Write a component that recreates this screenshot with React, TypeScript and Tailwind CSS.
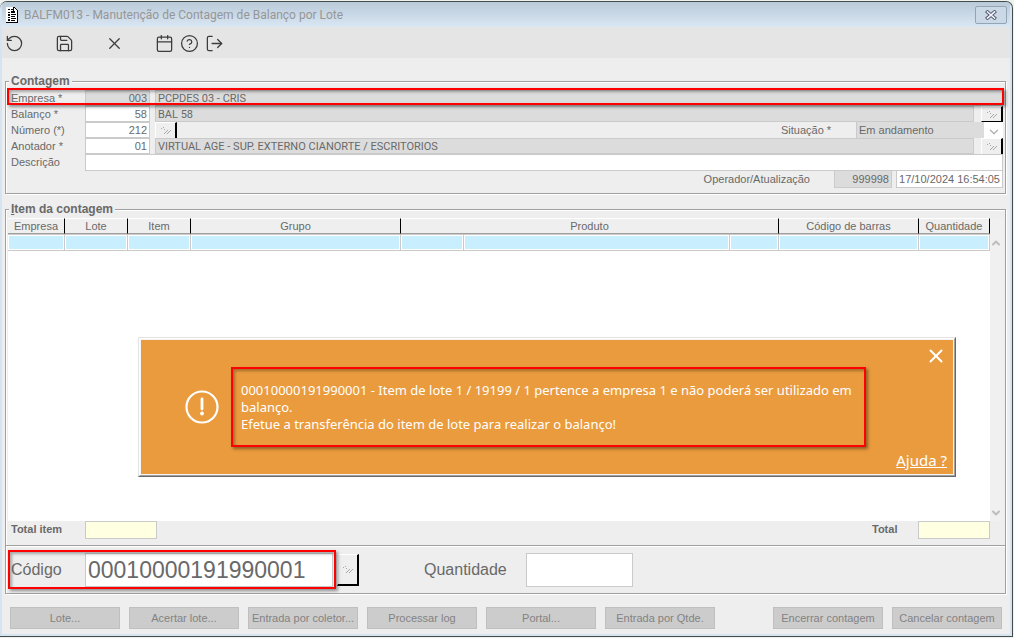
import React from 'react';
import { Calendar, ChevronDown, ChevronUp, CircleHelp, LogOut, RotateCcw, Save, X } from 'lucide-react';

const toolbarItems = [
    { label: 'Desfazer', Icon: RotateCcw },
    null,
    { label: 'Salvar', Icon: Save },
    null,
    { label: 'Excluir', Icon: X },
    null,
    { label: 'Calendário', Icon: Calendar },
    { label: 'Ajuda', Icon: CircleHelp },
    { label: 'Sair', Icon: LogOut },
];

const headers = [
    { label: 'Empresa', span: 1 },
    { label: 'Lote', span: 1 },
    { label: 'Item', span: 1 },
    { label: 'Grupo', span: 1 },
    { label: 'Produto', span: 3 },
    { label: 'Código de barras', span: 1 },
    { label: 'Quantidade', span: 1 },
];

const columnWidths = ['w-[57px]', 'w-[63px]', 'w-[63px]', 'w-[210px]', 'w-[63px]', '', 'w-[49px]', 'w-[140px]', 'w-[71px]'];

const leftActions = ['Lote...', 'Acertar lote...', 'Entrada por coletor...', 'Processar log', 'Portal...', 'Entrada por Qtde.'];
const rightActions = ['Encerrar contagem', 'Cancelar contagem'];

const fieldBase = 'min-w-0 border border-[#cacaca] outline-none text-[#696969]';
const nameField = `${fieldBase} ml-[5px] h-4 flex-1 bg-[#dcdcdc] px-[2px] pt-px font-['Roboto',sans-serif]`;
const labelBase = 'w-[79px] shrink-0 pl-[5px]';

const LookupButton: React.FC<{ label: string; className?: string }> = ({ label, className = 'h-4' }) => (
    <button
        type="button"
        aria-label={label}
        className={`flex w-[22px] shrink-0 items-center justify-center border-t border-l border-t-white border-l-white border-r-2 border-r-black bg-[#efefef] ${className}`}
    >
        <svg width="10" height="7" viewBox="0 0 10 7" fill="#a8a8a8" shapeRendering="crispEdges">
            <path d="M0 1h1v1H0zM2 0h1v1H2zM3 2h1v1H3zM6 3h1v1H6zM5 4h1v1H5zM4 5h1v1H4zM3 6h1v1H3zM9 3h1v1H9zM8 4h1v1H8zM7 5h1v1H7zM6 6h1v1H6z" />
        </svg>
    </button>
);

const Highlight: React.FC<{ className: string }> = ({ className }) => (
    <div className={`pointer-events-none absolute z-10 border-2 border-[#ff0000] shadow-[2px_2px_3px_rgba(0,0,0,0.4),inset_2px_2px_3px_rgba(0,0,0,0.3)] ${className}`} />
);

const TitleBar: React.FC = () => (
    <header className="flex h-[25px] items-center bg-linear-to-b from-[#b9cad9] to-[#dae7f4] pr-[3px] pl-1">
        <svg width="12" height="16" viewBox="0 0 12 16" shapeRendering="crispEdges">
            <path d="M0 0h8l4 4v12H0z" fill="#000" />
            <path d="M0 0h7v4h4v11H0z" fill="#fff" />
            <path d="M8 1l3 3H8z" fill="#fff" />
            <path d="M2 2h2v1H2zM5 2h2v1H5zM2 5h2v1H2zM5 4h4v2H5zM2 7h2v2H2zM5 7h5v1H5zM5 9h4v1H5zM2 10h2v1H2zM5 11h5v1H5zM2 12h2v2H2zM5 13h4v1H5z" fill="#000" />
        </svg>
        <h1 className="ml-[6px] flex-1 pt-px font-['Roboto',sans-serif] text-[12px] text-[#969696]">
            BALFM013 - Manutenção de Contagem de Balanço por Lote
        </h1>
        <button type="button" aria-label="Fechar janela" className="flex h-[18px] w-8 items-center justify-center rounded-[2px] border border-[#93a4b4] bg-[#cbd9e6]">
            <svg width="12" height="10" viewBox="0 0 12 10" strokeLinecap="square">
                <path d="M2.5 2l7 6M9.5 2l-7 6" stroke="#565c74" strokeWidth="3.6" />
                <path d="M2.5 2l7 6M9.5 2l-7 6" stroke="#f4f7fa" strokeWidth="1.6" />
            </svg>
        </button>
    </header>
);

const Toolbar: React.FC = () => (
    <nav className="flex h-[31px] items-center bg-[#e5e5e5] pt-px">
        {toolbarItems.map((item, i) =>
            item ? (
                <button key={i} type="button" aria-label={item.label} className="flex size-[25px] items-center justify-center text-[#3c3c3c]">
                    <item.Icon size={19} strokeWidth={1.6} />
                </button>
            ) : (
                <span key={i} className="w-[25px]" />
            )
        )}
    </nav>
);

const CountPanel: React.FC = () => (
    <fieldset className="relative min-w-0 border border-[#a0a0a0] pt-px pb-[6px] shadow-[1px_1px_0_#fff,inset_1px_1px_0_#fff]">
        <legend className="ml-[3px] bg-[#eeeeee] px-[2px] text-[12px] leading-4 font-bold">Contagem</legend>
        <div className="flex h-4 items-center pr-[2px]">
            <label htmlFor="empresa" className={labelBase}>Empresa *</label>
            <input id="empresa" readOnly defaultValue="003" className={`${fieldBase} h-4 w-[65px] bg-[#dcdcdc] px-[2px] text-right`} />
            <input aria-label="Nome da empresa" readOnly defaultValue="PCPDES 03 - CRIS" className={nameField} />
        </div>
        <div className="flex h-4 items-center pr-[2px]">
            <label htmlFor="balanco" className={labelBase}>Balanço *</label>
            <input id="balanco" defaultValue="58" className={`${fieldBase} h-4 w-[65px] bg-white px-[2px] text-right`} />
            <input aria-label="Nome do balanço" readOnly defaultValue="BAL 58" className={nameField} />
            <span className="w-[7px]" />
            <LookupButton label="Pesquisar balanço" className="h-4 border-b border-b-black" />
        </div>
        <div className="flex h-4 items-center pr-[2px]">
            <label htmlFor="numero" className={labelBase}>Número (*)</label>
            <input id="numero" defaultValue="212" className={`${fieldBase} mr-[5px] h-4 w-[65px] bg-white px-[2px] text-right`} />
            <LookupButton label="Pesquisar número" />
            <label htmlFor="situacao" className="ml-auto w-[75px]">Situação *</label>
            <div className="relative h-4 w-[147px]">
                <select id="situacao" className="h-4 w-full appearance-none border-l border-[#cacaca] bg-linear-to-r from-[#dcdcdc] from-[127px] to-white to-[127px] pl-[2px] outline-none">
                    <option>Em andamento</option>
                </select>
                <ChevronDown size={14} strokeWidth={2.4} className="pointer-events-none absolute top-[3px] right-[2px] text-[#b4b4b4]" />
            </div>
        </div>
        <div className="flex h-4 items-center pr-[2px]">
            <label htmlFor="anotador" className={labelBase}>Anotador *</label>
            <input id="anotador" defaultValue="01" className={`${fieldBase} h-4 w-[65px] bg-white px-[2px] text-right`} />
            <input aria-label="Nome do anotador" readOnly defaultValue="VIRTUAL AGE - SUP. EXTERNO CIANORTE / ESCRITORIOS" className={nameField} />
            <span className="w-[7px]" />
            <LookupButton label="Pesquisar anotador" />
        </div>
        <div className="flex h-4 items-center pr-[2px]">
            <label htmlFor="descricao" className={labelBase}>Descrição</label>
            <input id="descricao" className={`${fieldBase} h-[17px] flex-1 bg-white px-[2px]`} />
        </div>
        <div className="flex h-[17px] items-center justify-end pr-[2px]">
            <label htmlFor="operador" className="mr-6">Operador/Atualização</label>
            <input id="operador" readOnly defaultValue="999998" className={`${fieldBase} mr-1 h-[18px] w-[58px] bg-[#dcdcdc] px-[2px] text-right`} />
            <input aria-label="Data da atualização" defaultValue="17/10/2024 16:54:05" className={`${fieldBase} h-[18px] w-[107px] bg-white px-[2px] text-right`} />
        </div>
        <Highlight className="inset-x-px -top-px h-[17px]" />
    </fieldset>
);

const WarningDialog: React.FC = () => (
    <div
        role="alertdialog"
        aria-label="Aviso"
        className="absolute top-[119px] right-[48px] left-[130px] z-20 border border-t-[#e3e3e3] border-r-[#696969] border-b-[#696969] border-l-[#e3e3e3] font-['Noto_Sans',sans-serif] text-white"
    >
        <div className="border border-t-white border-r-[#a0a0a0] border-b-[#a0a0a0] border-l-white">
            <div className="flex h-[136px] items-center border border-[#f4f4f4] bg-[#ea9b3e]">
                <svg width="34" height="34" viewBox="0 0 34 34" fill="none" stroke="#fff" className="ml-[44px] shrink-0">
                    <circle cx="17" cy="17" r="15.5" strokeWidth="2.2" />
                    <path d="M17 9v10" strokeWidth="2.8" strokeLinecap="round" />
                    <circle cx="17" cy="23.5" r="1.9" fill="#fff" stroke="none" />
                </svg>
                <div className="relative mr-[87px] ml-[12px] flex h-[80px] flex-1 items-center pr-[10px] pl-[10px]">
                    <p className="text-[13px] leading-[17px]">
                        00010000191990001 - Item de lote 1 / 19199 / 1 pertence a empresa 1 e não poderá ser utilizado em balanço.
                        <br />
                        Efetue a transferência do item de lote para realizar o balanço!
                    </p>
                    <Highlight className="inset-0" />
                </div>
            </div>
        </div>
        <button type="button" aria-label="Fechar aviso" className="absolute top-[7px] right-2">
            <X size={22} strokeWidth={2.2} />
        </button>
        <a href="#ajuda" className="absolute right-2 bottom-[6px] text-[15px] leading-5 underline">Ajuda ?</a>
    </div>
);

const ItemsPanel: React.FC = () => (
    <fieldset className="mt-[7px] flex min-w-0 flex-1 flex-col border border-[#a0a0a0] shadow-[1px_1px_0_#fff,inset_1px_1px_0_#fff]">
        <legend className="ml-[3px] bg-[#eeeeee] px-[2px] text-[12px] leading-4 font-bold">
            <span className="underline">I</span>tem da contagem
        </legend>
        <div className="relative mt-px mr-px ml-[2px] flex min-h-[303px] flex-1">
            <div className="flex-1 bg-white">
                <table className="w-full table-fixed border-separate border-spacing-0">
                    <colgroup>
                        {columnWidths.map((width, i) => <col key={i} className={width} />)}
                    </colgroup>
                    <thead>
                        <tr>
                            {headers.map(h => (
                                <th key={h.label} colSpan={h.span} className="h-4 border-t border-r border-b border-t-white border-r-black border-b-[#a0a0a0] bg-[#efefef] p-0 leading-[14px] font-normal">
                                    {h.label}
                                </th>
                            ))}
                        </tr>
                    </thead>
                    <tbody>
                        <tr>
                            {columnWidths.map((_, i) => (
                                <td key={i} className="h-[17px] border-t border-r border-b border-[#cacaca] bg-[#c9effe] p-0 shadow-[inset_0_0_0_1px_#fff]" />
                            ))}
                        </tr>
                    </tbody>
                </table>
            </div>
            <div className="flex w-[14px] flex-col items-start justify-between bg-[#f0f0f0] pt-[19px] pb-[2px] text-[#bdbdbd]">
                <ChevronUp size={12} strokeWidth={4} />
                <ChevronDown size={12} strokeWidth={4} />
            </div>
            <WarningDialog />
        </div>
        <div className="flex h-6 items-start font-bold">
            <label htmlFor="total-item" className={labelBase}>Total item</label>
            <input id="total-item" readOnly className={`${fieldBase} h-[18px] w-[72px] bg-[#ffffe1]`} />
            <label htmlFor="total" className="ml-auto w-[46px]">Total</label>
            <input id="total" readOnly className={`${fieldBase} mr-[15px] h-[18px] w-[72px] bg-[#ffffe1]`} />
        </div>
        <div className="relative flex h-12 items-center border-t border-[#a0a0a0] pt-px text-[16px] shadow-[inset_0_1px_0_#fff]">
            <label htmlFor="codigo" className={labelBase}>Código</label>
            <input id="codigo" defaultValue="00010000191990001" className={`${fieldBase} h-[34px] w-[248px] bg-white px-[2px] text-[23px]`} />
            <span className="w-[4px]" />
            <LookupButton label="Pesquisar código" className="h-8 border-b-2 border-b-black" />
            <label htmlFor="quantidade" className="ml-[65px] w-[102px]">Quantidade</label>
            <input id="quantidade" className={`${fieldBase} h-[34px] w-[107px] bg-white px-[2px]`} />
            <Highlight className="top-[4px] left-[2px] h-[39px] w-[328px]" />
        </div>
    </fieldset>
);

const ActionButton: React.FC<{ label: string }> = ({ label }) => (
    <button type="button" className="h-[22px] w-[110px] border border-[#bfbfbf] bg-[#cccccc] whitespace-nowrap text-[#838383]">
        {label}
    </button>
);

const App: React.FC = () => (
    <div className="flex min-h-screen flex-col bg-[#eef2ee] pt-px pr-px pb-px font-['Liberation_Sans',Arial,sans-serif] text-[11px] leading-4 text-[#696969]">
        <div className="flex flex-1 flex-col overflow-hidden rounded-t-[7px] border-t border-r border-b border-[#464c4c] bg-[#d6e4f2] pr-[2px] pb-[2px] pl-[2px]">
            <TitleBar />
            <Toolbar />
            <main className="flex flex-1 flex-col bg-[#eeeeee] pt-[15px] pr-1 pl-[3px]">
                <CountPanel />
                <ItemsPanel />
                <footer className="flex justify-between gap-[9px] pt-[13px] pr-1 pb-[5px] pl-[5px]">
                    <div className="flex gap-[9px]">
                        {leftActions.map(label => <ActionButton key={label} label={label} />)}
                    </div>
                    <div className="flex gap-[9px]">
                        {rightActions.map(label => <ActionButton key={label} label={label} />)}
                    </div>
                </footer>
            </main>
        </div>
    </div>
);

export default App;
